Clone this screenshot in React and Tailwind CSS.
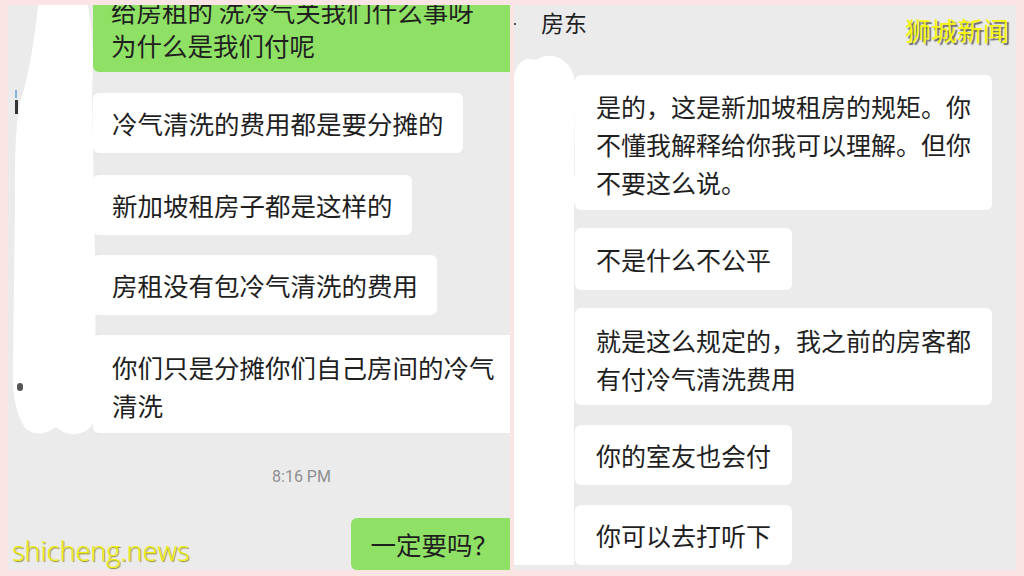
const bubbleText = 'text-[25.5px] text-[#1f1f1f] whitespace-nowrap'

function LeftPanel() {
  return (
    <div className="relative w-[502px] h-full shrink-0 bg-[#ebebeb] overflow-hidden">
      <div className="flex flex-col items-start pl-[85px]">
        <div className={`self-stretch mt-[-17px] pt-[6px] pb-[10px] pl-[18px] rounded-l-[6px] bg-[#8fe166] leading-[34px] ${bubbleText}`}>
          给房租的 洗冷气关我们什么事呀
          <br />
          为什么是我们付呢
        </div>
        <div className={`mt-[21px] px-[19px] py-4 rounded-[6px] bg-white leading-[28px] ${bubbleText}`}>
          冷气清洗的费用都是要分摊的
        </div>
        <div className={`mt-[22px] px-[19px] py-4 rounded-[6px] bg-white leading-[28px] ${bubbleText}`}>
          新加坡租房子都是这样的
        </div>
        <div className={`mt-[20px] px-[19px] py-4 rounded-[6px] bg-white leading-[28px] ${bubbleText}`}>
          房租没有包冷气清洗的费用
        </div>
        <div className={`self-stretch mt-[20px] pl-[19px] pt-[13px] pb-[9px] rounded-l-[6px] bg-white leading-[38px] ${bubbleText}`}>
          你们只是分摊你们自己房间的冷气
          <br />
          清洗
        </div>
        <div className="self-stretch mt-[34px] text-center text-[16px] leading-[20px] text-[#8f8f8f] font-['Roboto',sans-serif]">
          8:16 PM
        </div>
        <div className={`self-end mt-[31px] pl-[19px] pr-[12px] py-3 rounded-l-[6px] bg-[#8fe166] leading-[28px] ${bubbleText}`}>
          一定要吗？
        </div>
      </div>

      {/* redaction over the avatars */}
      <svg className="absolute left-0 top-0" width="100" height="440" viewBox="0 0 100 440">
        <path
          d="M30 0 L80 0 Q87 40 84 85 L86 200 Q89 320 86 385 Q92 418 78 426 Q62 434 48 422 Q32 434 18 424 Q3 404 5 360 L7 200 Q6 125 12 98 Q24 60 30 0 Z"
          fill="#ffffff"
        />
      </svg>
      <span className="absolute left-[7px] top-[85px] w-[2px] h-[8px] bg-[#7fb3e0]" />
      <span className="absolute left-[7px] top-[95px] w-[3px] h-[14px] bg-[#333]" />
      <span className="absolute left-[9px] top-[378px] w-[6px] h-[8px] bg-[#555] rounded-sm" />
    </div>
  )
}

function RightPanel() {
  return (
    <div className="relative w-[502px] h-full shrink-0 bg-[#ebebeb] overflow-hidden">
      <div className="pl-[27px] pt-[3px] text-[23px] leading-[28px] text-[#1f1f1f]">房东</div>
      <div className="flex flex-col items-start pl-[61px]">
        <div className="w-[417px] mt-[39px] px-[21px] pt-[12px] pb-[9px] rounded-[6px] bg-white leading-[38px] text-[25px] text-[#1f1f1f] whitespace-nowrap">
          是的，这是新加坡租房的规矩。你
          <br />
          不懂我解释给你我可以理解。但你
          <br />
          不要这么说。
        </div>
        <div className="mt-[18px] px-[21px] py-[17px] rounded-[6px] bg-white leading-[28px] text-[25px] text-[#1f1f1f] whitespace-nowrap">
          不是什么不公平
        </div>
        <div className="w-[417px] mt-[18px] px-[21px] pt-[13px] pb-[8px] rounded-[6px] bg-white leading-[38px] text-[25px] text-[#1f1f1f] whitespace-nowrap">
          就是这么规定的，我之前的房客都
          <br />
          有付冷气清洗费用
        </div>
        <div className="mt-[20px] px-[21px] py-4 rounded-[6px] bg-white leading-[28px] text-[25px] text-[#1f1f1f] whitespace-nowrap">
          你的室友也会付
        </div>
        <div className="mt-[20px] px-[21px] py-4 rounded-[6px] bg-white leading-[28px] text-[25px] text-[#1f1f1f] whitespace-nowrap">
          你可以去打听下
        </div>
      </div>

      <svg className="absolute left-0 top-0" width="70" height="565" viewBox="0 0 70 565">
        <path
          d="M0 72 Q4 50 22 55 Q36 46 50 56 Q64 66 61 95 L60 170 Q66 185 60 200 L60 560 L0 560 Z"
          fill="#ffffff"
        />
      </svg>
      <span className="absolute left-0 top-[18px] w-[2px] h-[2px] bg-[#555]" />
    </div>
  )
}

export default function App() {
  return (
    <div className="relative w-[1024px] h-[576px] overflow-hidden bg-[#fbe4e4] flex gap-[4px] px-[8px] pt-[5px] pb-[6px] font-['Noto_Sans_CJK_SC',sans-serif]">
      <LeftPanel />
      <RightPanel />

      <div className="absolute left-[905px] top-[14px] text-[26px] leading-[32px] text-[#f7f700] [text-shadow:2px_2px_1px_#6b6b6b]">
        狮城新闻
      </div>
      <div className="absolute left-[12px] top-[534px] text-[27px] leading-[34px] text-[#f2f000] font-['Open_Sans',sans-serif] font-light [text-shadow:1px_1px_1px_#8a8a4a]">
        shicheng.news
      </div>
    </div>
  )
}
